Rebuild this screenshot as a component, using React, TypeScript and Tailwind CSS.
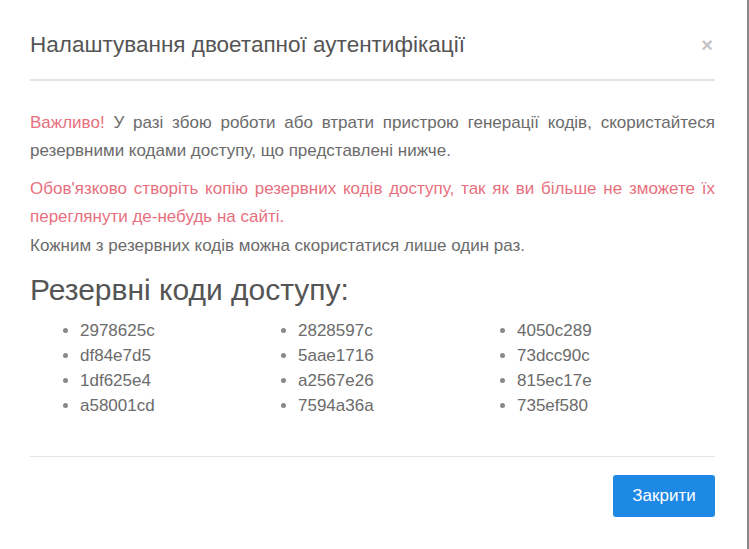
import React from 'react';

const codes = [
  ['2978625c', 'df84e7d5', '1df625e4', 'a58001cd'],
  ['2828597c', '5aae1716', 'a2567e26', '7594a36a'],
  ['4050c289', '73dcc90c', '815ec17e', '735ef580'],
];

export default function App() {
  return (
    <div
      className="w-[749px] h-[549px] bg-white border-r-2 border-[#8a8a8a] overflow-hidden"
      style={{ fontFamily: '"Liberation Sans", Arial, sans-serif' }}
    >
      <div className="px-[30px] w-[745px]">
        {/* Header */}
        <div className="h-[81px] pt-[11px] flex items-center justify-between border-b-2 border-[#e3e3e3]">
          <h4 className="text-[22.5px] text-[#555] leading-none">Налаштування двоетапної аутентифікації</h4>
          <span className="text-[#c4c4c4] font-bold text-[20px] leading-none mr-[2px]">×</span>
        </div>

        {/* Body */}
        <div className="pt-[28px] text-[17px] leading-[28px] text-[#6b6b6b]">
          <p className="text-justify">
            <span className="text-[#e8707e]">Важливо!</span> У разі збою роботи або втрати пристрою генерації кодів,
            скористайтеся резервними кодами доступу, що представлені нижче.
          </p>
          <p className="mt-[10px] text-justify text-[#e8707e]">
            Обов'язково створіть копію резервних кодів доступу, так як ви більше не зможете їх переглянути де-небудь
            на сайті.
          </p>
          <p className="pt-px">Кожним з резервних кодів можна скористатися лише один раз.</p>

          <h3 className="mt-[12px] text-[30px] leading-[36px] text-[#555]">Резервні коди доступу:</h3>

          <div className="mt-[10px] pl-[50px] grid grid-cols-[218px_219px_1fr]">
            {codes.map((col, i) => (
              <ul key={i} className="list-disc pl-0 ml-0 text-[17px] leading-[25px] text-[#6b6b6b] marker:text-[#888]">
                {col.map((c) => (
                  <li key={c}>{c}</li>
                ))}
              </ul>
            ))}
          </div>
        </div>

        {/* Footer */}
        <div className="mt-[38px] border-t border-[#e5e5e5] pt-[18px] flex justify-end">
          <button className="w-[102px] h-[42px] bg-[#1e88e5] text-white text-[17px] rounded-[3px]">Закрити</button>
        </div>
      </div>
    </div>
  );
}
